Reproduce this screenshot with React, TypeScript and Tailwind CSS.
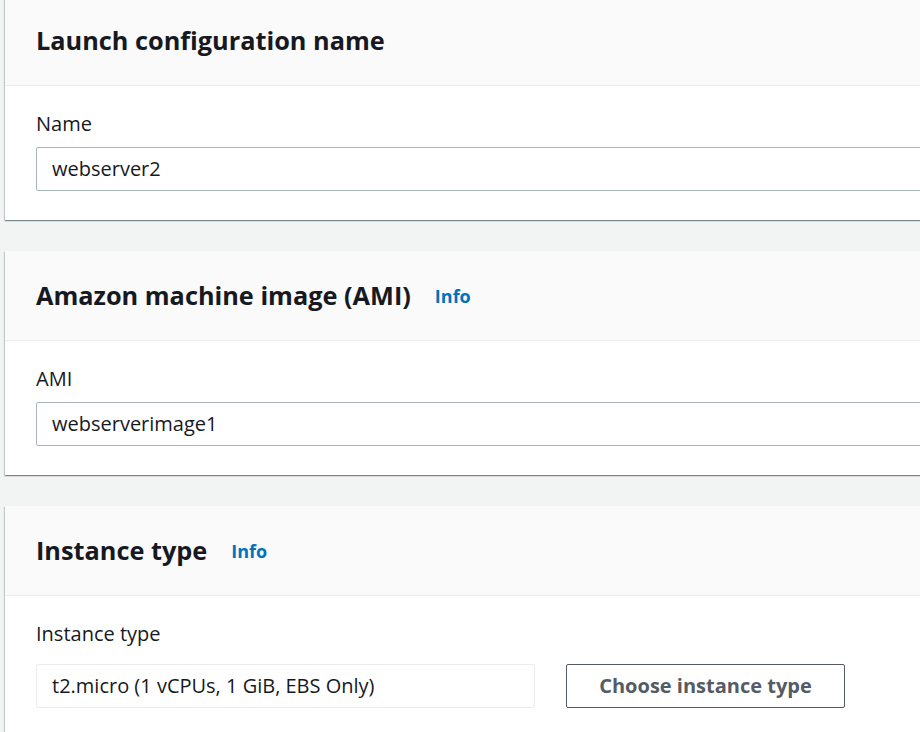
const cardShadow =
  'shadow-[0_1px_1px_0_rgba(0,28,36,0.3),1px_1px_1px_0_rgba(0,28,36,0.15),-1px_1px_1px_0_rgba(0,28,36,0.15)]';

function Info() {
  return <a className="ml-[24px] text-[18px] font-bold text-[#0073bb] leading-none">Info</a>;
}

function Card({
  title,
  info,
  children,
}: {
  title: string;
  info?: boolean;
  children: React.ReactNode;
}) {
  return (
    <section className={`w-[1100px] ml-[5px] bg-white ${cardShadow}`}>
      <div className="h-[90px] bg-[#fafafa] border-b border-[#eaeded] pl-[31px] flex items-center">
        <h2 className="text-[25.3px] font-bold text-[#16191f]">{title}</h2>
        {info && <Info />}
      </div>
      <div className="pl-[31px] pt-[24px] pb-[29px]">{children}</div>
    </section>
  );
}

function Label({ children }: { children: React.ReactNode }) {
  return <div className="text-[20px] text-[#16191f] leading-[28px] mb-[9px]">{children}</div>;
}

export default function App() {
  return (
    <div
      className="w-[920px] h-[732px] overflow-hidden bg-[#f2f3f3]"
      style={{ fontFamily: '"Open Sans", "Noto Sans", Arial, sans-serif' }}
    >
      <div className="-mt-[4px] flex flex-col gap-[31px]">
        <Card title="Launch configuration name">
          <Label>Name</Label>
          <div className="h-[44px] w-[1200px] border border-[#aab7b8] rounded-[2px] flex items-center px-[15px] text-[20px] text-[#16191f]">
            webserver2
          </div>
        </Card>

        <Card title="Amazon machine image (AMI)" info>
          <Label>AMI</Label>
          <div className="h-[44px] w-[1200px] border border-[#aab7b8] rounded-[2px] flex items-center px-[15px] text-[20px] text-[#16191f]">
            webserverimage1
          </div>
        </Card>

        <Card title="Instance type" info>
          <Label>Instance type</Label>
          <div className="mt-[16px] flex items-center gap-[31px]">
            <div className="h-[44px] w-[499px] border border-[#eaeded] rounded-[2px] flex items-center px-[15px] text-[20px] text-[#16191f]">
              t2.micro (1 vCPUs, 1 GiB, EBS Only)
            </div>
            <button className="h-[44px] w-[279px] border border-[#545b64] rounded-[2px] text-[20px] font-bold text-[#545b64]">
              Choose instance type
            </button>
          </div>
        </Card>
      </div>
    </div>
  );
}
